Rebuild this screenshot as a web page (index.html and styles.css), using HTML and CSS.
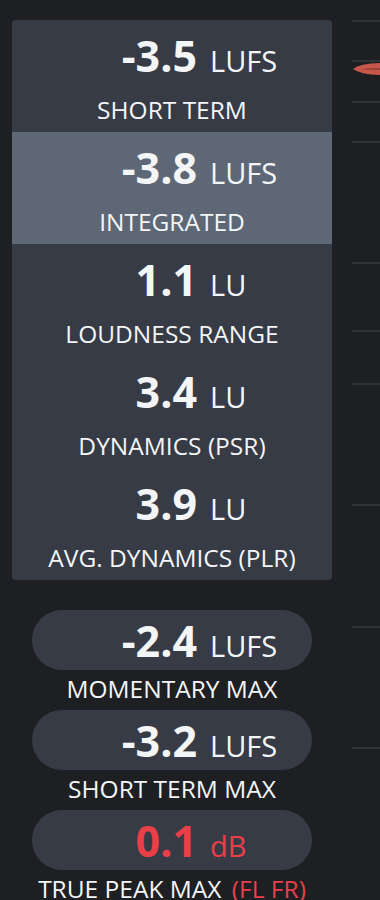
FILE: index.html
```html
<!DOCTYPE html>
<html lang="en">
<head>
  <meta charset="UTF-8">
  <meta name="viewport" content="width=device-width, initial-scale=1.0">
  <title>Loudness</title>
  <link rel="stylesheet" href="styles.css">
</head>
<body>

  <div class="meter">
    <div class="stats">

      <!-- main card -->
      <div class="card">
        <div class="row">
          <div class="val"><span class="num">-3.5</span><span class="unit">LUFS</span></div>
          <div class="label">SHORT TERM</div>
        </div>
        <div class="row active">
          <div class="val"><span class="num">-3.8</span><span class="unit">LUFS</span></div>
          <div class="label">INTEGRATED</div>
        </div>
        <div class="row">
          <div class="val"><span class="num">1.1</span><span class="unit">LU</span></div>
          <div class="label">LOUDNESS RANGE</div>
        </div>
        <div class="row">
          <div class="val"><span class="num">3.4</span><span class="unit">LU</span></div>
          <div class="label">DYNAMICS (PSR)</div>
        </div>
        <div class="row">
          <div class="val"><span class="num">3.9</span><span class="unit">LU</span></div>
          <div class="label">AVG. DYNAMICS (PLR)</div>
        </div>
      </div>

      <!-- max values -->
      <div class="maxes">
        <div class="max">
          <div class="pill"><span class="num">-2.4</span><span class="unit">LUFS</span></div>
          <div class="label">MOMENTARY MAX</div>
        </div>
        <div class="max">
          <div class="pill"><span class="num">-3.2</span><span class="unit">LUFS</span></div>
          <div class="label">SHORT TERM MAX</div>
        </div>
        <div class="max">
          <div class="pill warn"><span class="num">0.1</span><span class="unit">dB</span></div>
          <div class="label">TRUE PEAK MAX <span class="ch">(FL FR)</span></div>
        </div>
      </div>
    </div>

    <!-- scale strip on the right -->
    <div class="scale">
      <div class="tick" style="top: 20px"></div>
      <div class="tick" style="top: 60px"></div>
      <div class="tick" style="top: 101px"></div>
      <div class="tick" style="top: 141px"></div>
      <div class="tick" style="top: 262px"></div>
      <div class="tick" style="top: 330px"></div>
      <div class="tick" style="top: 383px"></div>
      <div class="tick" style="top: 504px"></div>
      <div class="tick" style="top: 626px"></div>
      <div class="tick" style="top: 747px"></div>
      <svg class="needle" width="28" height="16" viewBox="0 0 28 16">
        <path d="M1 8 Q8 2.5 28 2 L28 14 Q8 13.5 1 8 Z" fill="#c8574b"/>
        <path d="M8 8 Q18 6.5 28 7 L28 9 Q18 9.5 8 8 Z" fill="#9a4038"/>
      </svg>
    </div>
  </div>

</body>
</html>
```

FILE: styles.css
```css
body {
  margin: 0;
  padding: 0;
  background-color: #1d1f23;
  font-family: "Open Sans", "Noto Sans", sans-serif;
  color: #f4f5f7;
}
.meter {
  display: flex;
  width: 380px;
  height: 900px;
  overflow: hidden;
}
.stats {
  width: 320px;
  padding: 20px 0 0 12px;
}
.card {
  background: #363b45;
  border-radius: 4px;
  overflow: hidden;
}
.row {
  height: 112px;
  box-sizing: border-box;
  padding-top: 12px;
  display: flex;
  flex-direction: column;
  align-items: center;
}
.row.active {
  background: #5e6776;
}
.val {
  display: grid;
  grid-template-columns: 185px 1fr;
  column-gap: 13px;
  align-items: baseline;
  width: 100%;
  line-height: 48px;
}
.num {
  font-size: 43px;
  font-weight: 700;
  text-align: right;
}
.unit {
  font-size: 29px;
}
.label {
  font-size: 24.5px;
  line-height: 28px;
  margin-top: 11px;
  text-align: center;
}
.maxes {
  padding: 30px 20px 0;
}
.max {
  height: 100px;
  display: flex;
  flex-direction: column;
  align-items: center;
}
.max .label {
  margin-top: 5px;
}
.pill {
  display: grid;
  grid-template-columns: 165px 1fr;
  column-gap: 13px;
  align-items: baseline;
  width: 100%;
  height: 60px;
  line-height: 62px;
  border-radius: 30px;
  background: #363b45;
}
.pill.warn {
  color: #ea3f49;
}
.ch {
  color: #ea3f49;
  margin-left: 4px;
}
.scale {
  position: relative;
  flex: 1;
  margin-left: 20px;
}
.tick {
  position: absolute;
  left: 0;
  right: 0;
  height: 2px;
  background: #2f3237;
}
.needle {
  position: absolute;
  left: 0;
  top: 61px;
}
```
